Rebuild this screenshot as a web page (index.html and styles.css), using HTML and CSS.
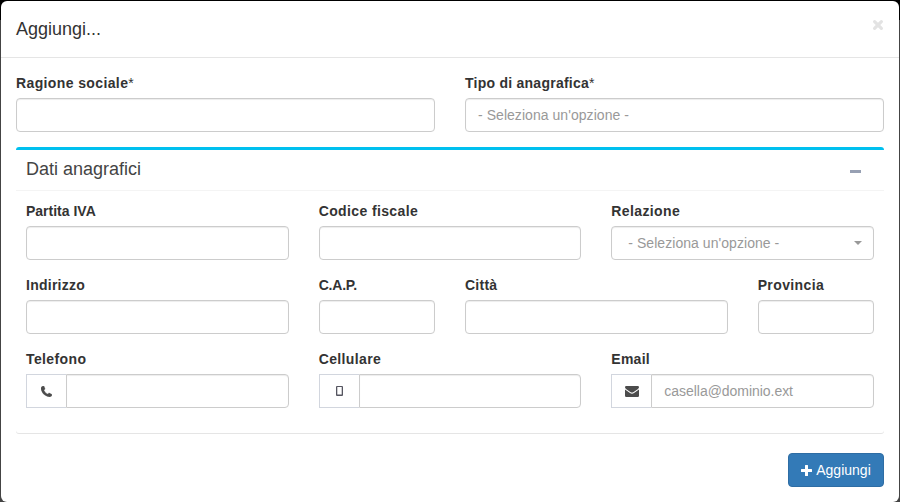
FILE: index.html
```html
<!DOCTYPE html>
<html lang="it">
<head>
<meta charset="utf-8">
<title>Aggiungi</title>
<link rel="stylesheet" href="styles.css">
</head>
<body>
<div class="modal">
  <header class="modal-header">
    <h4 class="modal-title">Aggiungi...</h4>
    <button class="close" aria-label="Chiudi"><svg width="12" height="12" viewBox="0 0 12 12"><path d="M2.600 2.600l6.800 6.800M9.400 2.600L2.600 9.400" stroke="currentColor" stroke-width="3.200" stroke-linecap="round"/></svg></button>
  </header>
  <div class="modal-body">
    <div class="row-main">
      <div class="field"><label><span class="wide">Ragione sociale</span><span class="req">*</span></label><input class="control" type="text"></div>
      <div class="field"><label>Tipo di anagrafica<span class="req">*</span></label><div class="control placeholder">- Seleziona un'opzione -</div></div>
    </div>
    <section class="box">
      <div class="box-header">
        <h3 class="box-title">Dati anagrafici</h3>
        <svg class="collapse" width="11" height="3" viewBox="0 0 11 3"><rect width="11" height="3" fill="#97a0b3"/></svg>
      </div>
      <div class="box-body">
        <div class="field span4"><label class="tight">Partita IVA</label><input class="control" type="text"></div>
        <div class="field span4"><label class="wide">Codice fiscale</label><input class="control" type="text"></div>
        <div class="field span4"><label class="wide">Relazione</label><div class="control placeholder select">- Seleziona un'opzione -<span class="caret"></span></div></div>
        <div class="field span4"><label>Indirizzo</label><input class="control" type="text"></div>
        <div class="field span2"><label class="tighter">C.A.P.</label><input class="control" type="text"></div>
        <div class="field span4"><label>Città</label><input class="control" type="text"></div>
        <div class="field span2"><label class="wide">Provincia</label><input class="control" type="text"></div>
        <div class="field span4"><label class="wide">Telefono</label>
          <div class="group"><span class="addon"><svg width="11" height="11" viewBox="0 0 11 11"><path d="M.4 1.1Q1 .1 2.500 0q.5 0 .7.5l.8 2.200q.1.5-.4.9l-.7.6q1.200 2.600 3.700 3.900l.8-.7q.4-.5.9-.3l2.300 1.100q.5.3.4.8-.3 1.100-1.100 1.600-1.300.7-3.300 0Q2 9 .4 4.500-.4 2.300.4 1.100z" fill="#4c4c4c" stroke="#4c4c4c" stroke-width=".3"/></svg></span><input class="control" type="text"></div></div>
        <div class="field span4"><label class="wide">Cellulare</label>
          <div class="group"><span class="addon"><svg width="7" height="10" viewBox="0 0 7 10"><path fill-rule="evenodd" d="M1 0h5q1 0 1 1v8q0 1-1 1H1q-1 0-1-1V1q0-1 1-1zm.3 1v7.500h4.400V1z" fill="#555560"/></svg></span><input class="control" type="text"></div></div>
        <div class="field span4"><label>Email</label>
          <div class="group"><span class="addon"><svg width="14" height="11" viewBox="0 0 14 11"><path d="M0 1.2Q0 0 1.2 0h11.6Q14 0 14 1.2q0 .9-1 1.7L8.3 6.2Q7 7 5.700 6.200L1 2.900Q0 2.100 0 1.200zM0 3.500l5 3.500q2 1.400 4 0l5-3.500v6.300q0 1.200-1.200 1.200H1.200Q0 11 0 9.800z" fill="#4c4c4c"/></svg></span><div class="control placeholder">casella@dominio.ext</div></div></div>
      </div>
    </section>
    <div class="actions">
      <button class="primary"><svg width="11" height="11" viewBox="0 0 11 11"><path d="M4 .5Q4 0 4.500 0h2Q7 0 7 .5V4h3.500q.5 0 .5.500v2q0 .5-.5.500H7v3.500q0 .5-.5.500h-2Q4 11 4 10.500V7H.5Q0 7 0 6.500v-2Q0 4 .5 4H4z" fill="#fff"/></svg><span>Aggiungi</span></button>
    </div>
  </div>
</div>
</body>
</html>
```
FILE: styles.css
```css
* { box-sizing: border-box; }
body {
  margin: 0;
  height: 502px;
  padding: 1px 1px 0;
  overflow: hidden;
  background: linear-gradient(#000 20px, #444 20px);
  font: 14px/20px "Liberation Sans", Arial, sans-serif;
  color: #333;
}
.modal { height: 501px; background: #fff; border-radius: 6px; }
.modal-header {
  display: flex;
  justify-content: space-between;
  align-items: flex-start;
  height: 57px;
  padding: 15px;
  border-bottom: 1px solid #e5e5e5;
}
h3, h4 { margin: 0; font-size: 18px; font-weight: 400; }
.modal-title { line-height: 26px; }
.close { display: flex; margin: 3px 0 0; padding: 0; border: 0; background: none; color: #e3e3e3; }
.modal-body { padding: 15px; }
.row-main { display: grid; grid-template-columns: 1fr 1fr; gap: 30px; }
.field { min-width: 0; }
label {
  display: block;
  height: 20px;
  margin-bottom: 5px;
  font-weight: 700;
  letter-spacing: .25px;
  white-space: nowrap;
}
.wide { letter-spacing: .38px; }
.tight { letter-spacing: 0; }
.tighter { letter-spacing: -.2px; }
.req { font-weight: 400; letter-spacing: 0; }
.control {
  display: block;
  width: 100%;
  height: 34px;
  padding: 6px 12px;
  border: 1px solid #ccc;
  border-radius: 4px;
  background: #fff;
  box-shadow: inset 0 1px 1px rgba(0, 0, 0, .075);
  font: inherit;
}
.placeholder { color: #999; white-space: nowrap; letter-spacing: .05px; }
.group .placeholder { letter-spacing: -.04px; }
.select { display: flex; align-items: center; justify-content: space-between; padding-left: 16px; padding-right: 11px; }
.caret { border: 4px solid transparent; border-top: 4px solid #999; border-bottom: 0; }
.box {
  margin-top: 15px;
  border-top: 3px solid #00c0ef;
  border-radius: 3px;
  box-shadow: 0 1px 0 #e5e5e5;
}
.box-header {
  display: flex;
  justify-content: space-between;
  align-items: center;
  height: 41px;
  padding: 0 23px 2px 10px;
  border-bottom: 1px solid #f4f4f4;
}
.box-title { color: #444; }
.collapse { margin-top: 5px; }
.box-body {
  display: grid;
  grid-template-columns: repeat(12, minmax(0, 1fr));
  gap: 15px 30px;
  padding: 10px 10px 25px;
}
.span4 { grid-column: span 4; }
.span2 { grid-column: span 2; }
.group { display: flex; }
.addon {
  flex: 0 0 40px;
  display: flex;
  align-items: center;
  justify-content: center;
  height: 34px;
  border: 1px solid #d2d6de;
  border-right: 0;
}
.group .control { flex: 1; min-width: 0; border-radius: 0 4px 4px 0; }
.actions { display: flex; justify-content: flex-end; margin-top: 20px; }
.primary {
  display: flex;
  align-items: center;
  justify-content: center;
  gap: 4px;
  width: 96px;
  height: 34px;
  padding: 0;
  border: 1px solid #2e6da4;
  border-radius: 4px;
  background: #337ab7;
  color: #fff;
  font: inherit;
}
```
